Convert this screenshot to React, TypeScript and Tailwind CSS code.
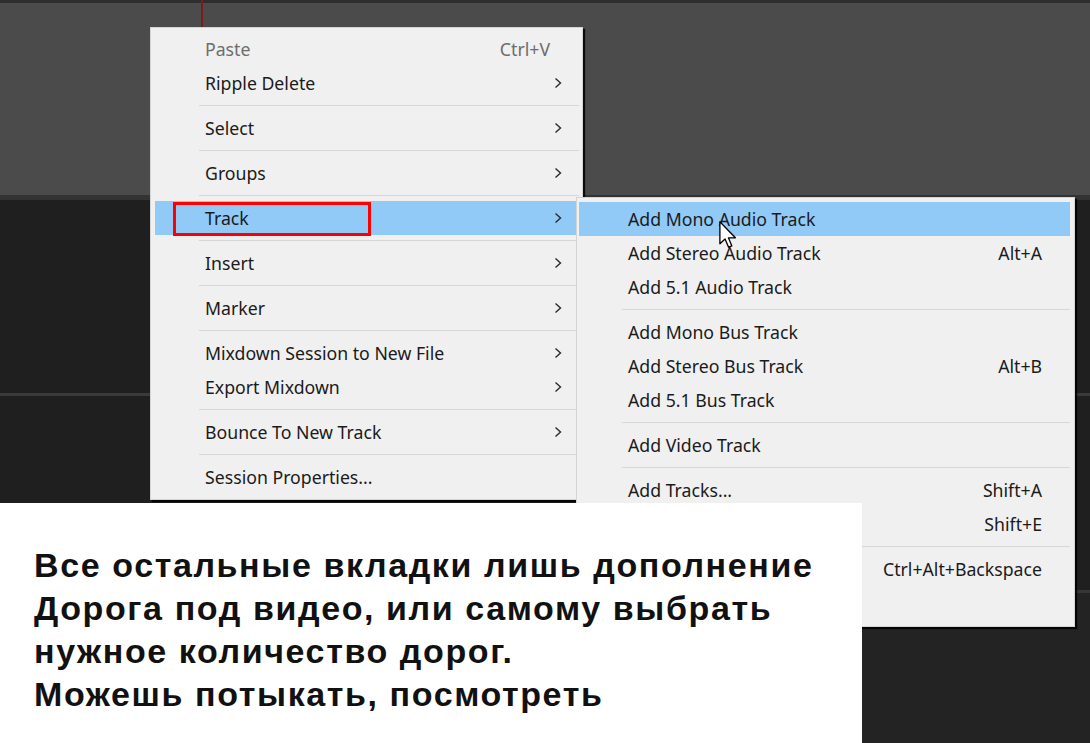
import React from "react";

type Item =
  | { sep: true }
  | { sep?: false; label: string; shortcut?: string; arrow?: boolean; disabled?: boolean; active?: boolean; boxed?: boolean };

const mainItems: Item[] = [
  { label: "Paste", shortcut: "Ctrl+V", disabled: true },
  { label: "Ripple Delete", arrow: true },
  { sep: true },
  { label: "Select", arrow: true },
  { sep: true },
  { label: "Groups", arrow: true },
  { sep: true },
  { label: "Track", arrow: true, active: true, boxed: true },
  { sep: true },
  { label: "Insert", arrow: true },
  { sep: true },
  { label: "Marker", arrow: true },
  { sep: true },
  { label: "Mixdown Session to New File", arrow: true },
  { label: "Export Mixdown", arrow: true },
  { sep: true },
  { label: "Bounce To New Track", arrow: true },
  { sep: true },
  { label: "Session Properties..." },
];

const subItems: Item[] = [
  { label: "Add Mono Audio Track", active: true },
  { label: "Add Stereo Audio Track", shortcut: "Alt+A" },
  { label: "Add 5.1 Audio Track" },
  { sep: true },
  { label: "Add Mono Bus Track" },
  { label: "Add Stereo Bus Track", shortcut: "Alt+B" },
  { label: "Add 5.1 Bus Track" },
  { sep: true },
  { label: "Add Video Track" },
  { sep: true },
  { label: "Add Tracks...", shortcut: "Shift+A" },
  { label: "", shortcut: "Shift+E" },
  { sep: true },
  { label: "", shortcut: "Ctrl+Alt+Backspace" },
  { label: "" },
];

function Chevron() {
  return (
    <svg width="8" height="12" viewBox="0 0 8 12" className="shrink-0">
      <polyline points="1.5,1.5 6.5,6 1.5,10.5" fill="none" stroke="#2a2a2a" strokeWidth="1.4" />
    </svg>
  );
}

function MainMenu() {
  return (
    <div className="absolute left-[150px] top-[27px] w-[433px] h-[473px] bg-[#f0f0f0] border border-[#d4d4d4] pt-[4px] pl-[4px] pr-[3px] shadow-[2px_2px_1px_rgba(0,0,0,0.85)]">
      {mainItems.map((it, i) =>
        it.sep ? (
          <div key={i} className="h-[11px] flex items-center pl-[44px]">
            <div className="h-px w-full bg-[#d7d7d7]" />
          </div>
        ) : (
          <div
            key={i}
            className={`relative h-[34px] flex items-center pl-[50px] pr-[17px] ${it.active ? "bg-[#91c9f7]" : ""}`}
          >
            {it.boxed && (
              <div className="absolute left-[18px] top-[1px] w-[198px] h-[34px] border-[3px] border-[#ff0000]" />
            )}
            <span className={`flex-1 ${it.disabled ? "text-[#6d6d6d]" : "text-[#1b1b1b]"}`}>{it.label}</span>
            {it.shortcut && <span className="text-[#6d6d6d] mr-[12px]">{it.shortcut}</span>}
            {it.arrow && <Chevron />}
          </div>
        )
      )}
    </div>
  );
}

function SubMenu() {
  return (
    <div className="absolute left-[576px] top-[197px] w-[499px] h-[430px] bg-[#f0f0f0] border border-[#d4d4d4] pt-[4px] pl-[2px] pr-[4px] shadow-[2px_2px_1px_rgba(0,0,0,0.85)]">
      {subItems.map((it, i) =>
        it.sep ? (
          <div key={i} className="h-[11px] flex items-center pl-[43px]">
            <div className="h-px w-full bg-[#d7d7d7]" />
          </div>
        ) : (
          <div
            key={i}
            className={`h-[34px] flex items-center pl-[49px] pr-[28px] ${it.active ? "bg-[#91c9f7]" : ""}`}
          >
            <span className="flex-1 text-[#1b1b1b]">{it.label}</span>
            {it.shortcut && <span className="text-[#1b1b1b]">{it.shortcut}</span>}
          </div>
        )
      )}
    </div>
  );
}

function Cursor() {
  return (
    <svg className="absolute left-[719px] top-[221px]" width="18" height="28" viewBox="0 0 12 19">
      <path
        d="M0.5 0.5 L0.5 15.5 L4 12.2 L6.4 17.8 L8.6 16.9 L6.3 11.4 L11 11.4 Z"
        fill="#ffffff"
        stroke="#000000"
        strokeWidth="0.9"
        strokeLinejoin="round"
      />
    </svg>
  );
}

export default function App() {
  return (
    <div
      className="relative w-[1090px] h-[743px] overflow-hidden bg-[#202020] text-[17.7px]"
      style={{ fontFamily: '"Noto Sans", "Open Sans", sans-serif' }}
    >
      <div className="flex flex-col h-full">
        <div className="h-[3px] bg-[#2e2e2e]" />
        <div className="h-[192px] bg-[#4b4b4b] relative">
          <div className="absolute left-[201px] top-[-3px] w-[2px] h-[30px] bg-[#7a1c1c]" />
        </div>
        <div className="h-[5px] bg-[#333333]" />
        <div className="h-[193px] bg-[#1f1f1f]" />
        <div className="h-[3px] bg-[#3a3a3a]" />
        <div className="h-[194px] bg-[#1f1f1f]" />
        <div className="h-[3px] bg-[#363636]" />
        <div className="flex-1 bg-[#232323]" />
      </div>

      <MainMenu />
      <SubMenu />
      <Cursor />

      <div className="absolute left-0 top-[503px] w-[862px] h-[240px] bg-white pl-[34px] pt-[41px]">
        <div
          className="text-[34px] leading-[43px] font-bold tracking-[1.6px] text-[#111111]"
          style={{ fontFamily: '"Liberation Sans", Arial, sans-serif' }}
        >
          <div>Все остальные вкладки лишь дополнение</div>
          <div>Дорога под видео, или самому выбрать</div>
          <div>нужное количество дорог.</div>
          <div>Можешь потыкать, посмотреть</div>
        </div>
      </div>
    </div>
  );
}
